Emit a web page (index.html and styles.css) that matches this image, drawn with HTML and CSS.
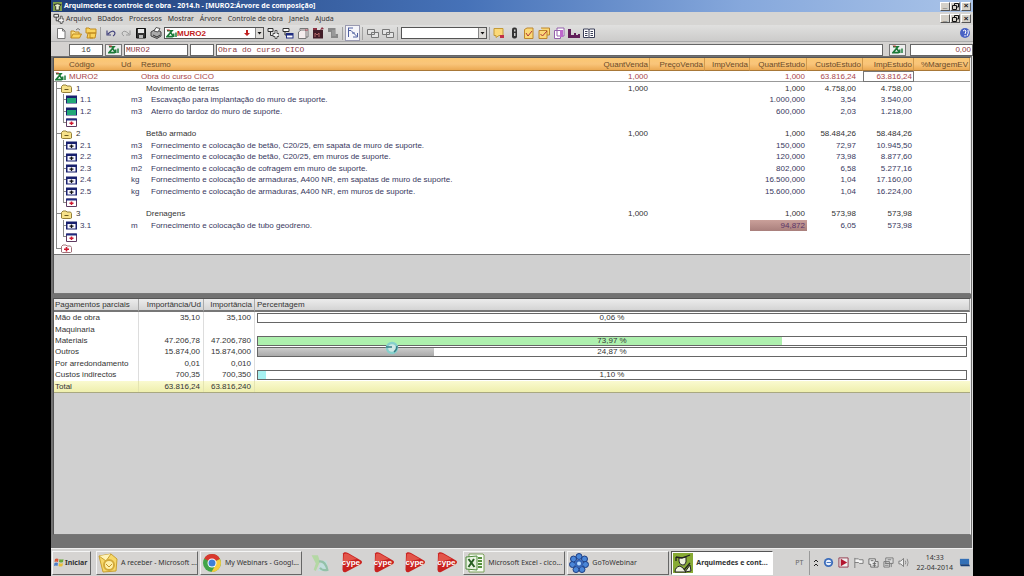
FILE: index.html
```html
<!DOCTYPE html>
<html lang="pt">
<head>
<meta charset="utf-8">
<title>Arquimedes e controle de obra</title>
<link rel="stylesheet" href="styles.css">
</head>
<body>
<svg class="defs" aria-hidden="true">
  <symbol id="arq" viewBox="0 0 12 10"><path d="M1 2h5.500L1 8.500h6.500M5 4l3.500 4.500" fill="none" stroke="#1c7a38" stroke-width="1.800"/><path d="M0 .5h4v2z" fill="#c03030"/><path d="M8.500 5v4M11 4v5" stroke="#1c7a38" stroke-width="1.600"/></symbol>
  <symbol id="folder" viewBox="0 0 11 9"><path d="M.5 8V2.500L2 1h3l1 1h3.500l1 1.500V8l-1 .5h-8z" fill="#f6e28a" stroke="#94803a"/><path d="M3.500 5.500h4" stroke="#6a5a20"/></symbol>
  <symbol id="green" viewBox="0 0 11 9"><path d="M0 .5h11v8H0z" fill="#18206e"/><path d="M1 3h9v5H1z" fill="#22a878"/></symbol>
  <symbol id="item" viewBox="0 0 11 9"><path d="M0 .5h11v8H0z" fill="#18206e"/><path d="M1.500 3h8v4.500h-8z" fill="#f6f6ff"/><path d="M3.500 5.200h4M5.500 3.500v3.500" stroke="#111" stroke-width="1.300"/></symbol>
  <symbol id="new" viewBox="0 0 11 9"><path d="M.5 1h10v7.500H.5z" fill="#fff" stroke="#5d3a60"/><path d="M0 .5h11v2H0z" fill="#202c80"/><path d="M3.500 5.200h4M5.500 3.500v3.500" stroke="#d01830" stroke-width="1.500"/></symbol>
  <symbol id="newfolder" viewBox="0 0 11 9"><path d="M.5 8V2.500L2 1h3l1 1h3.500l1 1.500V8l-1 .5h-8z" fill="#fff" stroke="#a07078"/><path d="M3 5.200h5M5.500 3v4.500" stroke="#d01830" stroke-width="1.600"/></symbol>
  <symbol id="add" viewBox="0 0 12 12"><path d="M1 1.500h5v3H1zM3.500 4.500v4h3" fill="#eee" stroke="#333"/><path d="M8 3.500v3H6v3h2v2h2v-2h2v-3h-2v-3z" fill="#f4f4f4" stroke="#555"/></symbol>
  <symbol id="copies" viewBox="0 0 12 12"><path d="M.5 2.500h7v5h-7zM4.500 5.500h7v5h-7z" fill="#e4e4e4" stroke="#777"/></symbol>
  <symbol id="cype" viewBox="0 0 22 21"><path d="M2 1.500C3 0 5 0 7 1l13 7.500q2 1.500 0 3.500L5 20q-3 1-3.500-2z" fill="#c9211f"/><path d="M3 2q2-1 4 0l9 5L2 10z" fill="#e2554a"/></symbol>
</svg>
<div class="app">
  <header class="titlebar">
    <svg viewBox="0 0 10 10" class="logo"><path d="M0 0h10v10H0z" fill="#7fa04a"/><path d="M1 3l4-1 4 1-2 2v4H3V5z" fill="#e8efd0" stroke="#222"/></svg>
    <h1>Arquimedes e controle de obra - 2014.h - [MURO2:Árvore de composição]</h1>
    <div class="winbtns"><button aria-label="Minimizar">_</button><button aria-label="Restaurar"><svg viewBox="0 0 7 7"><path d="M2.500 2.500v-2h4v3.500h-2M.5 2.500h4v4h-4z" fill="none" stroke="#111"/></svg></button><button class="close" aria-label="Fechar">×</button></div>
  </header>
  <nav class="menubar">
    <svg class="ico"><use href="#add"/></svg>
    <a href="#">Arquivo</a><a href="#">BDados</a><a href="#">Processos</a><a href="#">Mostrar</a><a href="#">Árvore</a><a href="#">Controle de obra</a><a href="#">Janela</a><a href="#">Ajuda</a>
    <div class="winbtns"><button aria-label="Minimizar janela">_</button><button aria-label="Restaurar janela"><svg viewBox="0 0 7 7"><path d="M2.500 2.500v-2h4v3.500h-2M.5 2.500h4v4h-4z" fill="none" stroke="#111"/></svg></button><button class="close" aria-label="Fechar janela">×</button></div>
  </nav>
  <div class="toolbar">
    <button aria-label="Novo"><svg viewBox="0 0 12 12"><path d="M2.500 1.500h5l2.500 2.500v7.500H2.500z" fill="#fff" stroke="#777"/><path d="M7.500 1.500v2.500H10" fill="none" stroke="#777"/></svg></button>
    <button aria-label="Abrir"><svg viewBox="0 0 12 12"><path d="M1 11V4h3l1 1h4v2" fill="#f9dd80" stroke="#c08a20"/><path d="M1 11l2-4h8.500l-2 4z" fill="#fbd45c" stroke="#c08a20"/><path d="M6 3q2-3 4 0" fill="none" stroke="#777"/></svg></button>
    <button aria-label="Bancos de dados"><svg viewBox="0 0 12 12"><path d="M1 6V1h3l1 1h6v4zM2 11l1-5h8l-1 5z" fill="#fbd45c" stroke="#c08a20"/><path d="M5 6v5h3" fill="none" stroke="#c08a20"/></svg></button>
    <span class="sep"></span>
    <button aria-label="Desfazer"><svg viewBox="0 0 12 12"><path d="M3 7q5-5 7-1 0 2-2 3M2 3.500V8h4" fill="none" stroke="#42427c" stroke-width="1.200"/></svg></button>
    <button aria-label="Refazer"><svg viewBox="0 0 12 12"><path d="M9 7Q4 2 2 6q0 2 2 3M10 3.500V8H6" fill="none" stroke="#999"/></svg></button>
    <button aria-label="Guardar"><svg viewBox="0 0 12 12"><path d="M1.500 1.500h9v9.500h-9z" fill="#333" stroke="#111"/><path d="M3 2h6v4H3z" fill="#e8e8e8"/><path d="M4 8h4v3H4z" fill="#bbb"/></svg></button>
    <button aria-label="Imprimir"><svg viewBox="0 0 12 12"><path d="M1 5l5-3 5 3v4l-4 2.500L1 9z" fill="#aaa" stroke="#444"/><path d="M4 4l2-3.500 4 1L8 5z" fill="#fff" stroke="#555"/><path d="M3 8l4 2 3-2" fill="none" stroke="#333"/></svg></button>
    <div class="combo obra"><svg class="arq"><use href="#arq"/></svg><select aria-label="Obra"><option>MURO2</option></select><svg class="down" viewBox="0 0 6 8"><path d="M2 1h2v3h2L3 7 0 4h2z" fill="#c02020"/></svg><svg class="drop" viewBox="0 0 7 10"><path d="M1.500 4h4l-2 2.500z" fill="#111"/></svg></div>
    <button aria-label="Acrescentar"><svg><use href="#add"/></svg></button>
    <button aria-label="Níveis"><svg viewBox="0 0 12 12"><path d="M1 1.500h6v3H1z" fill="#fff" stroke="#333"/><path d="M3 5v3h3" fill="none" stroke="#333"/><path d="M4 6h7.500v5.500H4z" fill="#202c80"/><path d="M5 8.500h5.500v2H5z" fill="#fff"/></svg></button>
    <button aria-label="Folhas"><svg viewBox="0 0 12 12"><path d="M3 3V1.500h8V10H9M1.500 11.500V5L4 3h5v8.500z" fill="#f5eded" stroke="#777"/><path d="M8 3h3" stroke="#b04050"/></svg></button>
    <button aria-label="Medições"><svg viewBox="0 0 12 12"><path d="M1 3h10v8.500H1z" fill="#421d28"/><path d="M3 10V6l2 2 2-2v4" fill="none" stroke="#b06868"/><path d="M8 3l2-3 2 2M1 1h4v2H1z" fill="#8a3040"/></svg></button>
    <button aria-label="Relatório"><svg viewBox="0 0 12 12"><path d="M1 1h7.500v6H11v4H4V5H1z" fill="#888"/><path d="M5 4h3M5 6h3M5 8h4" stroke="#aaa"/></svg></button>
    <span class="sep"></span>
    <button class="pressed" aria-label="Árvore"><svg viewBox="0 0 12 12"><path d="M1 1h5M1.500 1v9M1 3.500h3l6 6M5 6h3M6 10h4.500V6" fill="none" stroke="#5060a0"/></svg></button>
    <span class="sep"></span>
    <button aria-label="Janela anterior"><svg><use href="#copies"/></svg></button>
    <button aria-label="Janela seguinte"><svg><use href="#copies"/></svg></button>
    <span class="sep"></span>
    <div class="combo vista"><select aria-label="Vista"><option></option></select><svg class="drop" viewBox="0 0 7 10"><path d="M1.500 4h4l-2 2.500z" fill="#111"/></svg></div>
    <span class="sep"></span>
    <button aria-label="Nota"><svg viewBox="0 0 12 12"><path d="M1 1.500h9v7H6l-3 2v-2H1z" fill="#fbd978" stroke="#c39a38"/><path d="M7 8h4v3H7z" fill="#c03048"/></svg></button>
    <button aria-label="Semáforo"><svg viewBox="0 0 12 12"><rect x="4" y=".5" width="5" height="11" rx="2" fill="#333"/><path d="M6 2.500h1.500v2H6zM6 6h1.500v3H6z" fill="#ccc"/></svg></button>
    <button aria-label="Verificar"><svg viewBox="0 0 12 12"><path d="M1.500 2.500L4 1h6v10.500H1.500z" fill="#fbd978" stroke="#bd862d"/><path d="M3 6l2 3 4-5" fill="none" stroke="#b03838"/></svg></button>
    <button aria-label="Verificar tudo"><svg viewBox="0 0 12 12"><path d="M3 1h8.500v7H9M1 3.500h8v8H1z" fill="#fbd978" stroke="#bd862d"/><path d="M2.500 7l2 2L9 4" fill="none" stroke="#b03838"/></svg></button>
    <button aria-label="Cópia"><svg viewBox="0 0 12 12"><path d="M4 1h7v8H4zM1.500 3.500h6v8h-6z" fill="#fff" stroke="#9460ac"/><path d="M7 3h3v7H7z" fill="#bf68cc"/></svg></button>
    <button aria-label="Histograma"><svg viewBox="0 0 12 12"><path d="M0 2v9h12V7h-2v1H8V6H6v2H3V2z" fill="#601e58"/></svg></button>
    <button aria-label="Livro"><svg viewBox="0 0 12 12"><path d="M.5 2h5L6 3l.5-1h5v8.500h-5L6 11l-.5-.5h-5z" fill="#fff" stroke="#3a3f58"/><path d="M2 4.500h2.500M2 6.500h2.500M2 8.500h2.500M7.500 4.500H10M7.500 6.500H10M7.500 8.500H10M6 3v8" stroke="#3a3f58"/></svg></button>
    <button class="help" aria-label="Ajuda"><svg viewBox="0 0 12 12"><circle cx="6" cy="6" r="5" fill="#4862c4"/><path d="M4 4q2-2 3 0l-1 3M6 8v1.500M9 3q1 3-1 6" fill="none" stroke="#fff"/></svg></button>
  </div>
  <div class="fields">
    <input class="num" aria-label="Linha" value="16">
    <button aria-label="Obra"><svg class="arq"><use href="#arq"/></svg></button>
    <input class="cod" aria-label="Código" value="MURO2">
    <input class="un" aria-label="Unidade">
    <input class="desc" aria-label="Resumo" value="Obra do curso CICO">
    <button class="b2" aria-label="Valor"><svg class="arq"><use href="#arq"/></svg></button>
    <input class="val" aria-label="Margem" value="0,00">
  </div>
  <main>
    <section class="pane tree">
      <table>
        <colgroup><col class="c-cod"><col class="c-ud"><col><col class="c-qv"><col class="c-pv"><col class="c-iv"><col class="c-qe"><col class="c-ce"><col class="c-ie"><col class="c-mg"></colgroup>
        <thead><tr><th class="h-cod">Código</th><th>Ud</th><th>Resumo</th><th class="r">QuantVenda</th><th class="r">PreçoVenda</th><th class="r">ImpVenda</th><th class="r">QuantEstudo</th><th class="r">CustoEstudo</th><th class="r">ImpEstudo</th><th class="r">%MargemEV</th></tr></thead>
        <tbody>
        <tr class="root"><td class="l0"><svg class="arq"><use href="#arq"/></svg>MURO2</td><td></td><td class="t0">Obra do curso CICO</td><td class="r">1,000</td><td></td><td></td><td class="r">1,000</td><td class="r ce">63.816,24</td><td class="r sel">63.816,24</td><td></td></tr>
        <tr><td class="l1"><svg><use href="#folder"/></svg>1</td><td></td><td class="t1">Movimento de terras</td><td class="r">1,000</td><td></td><td></td><td class="r">1,000</td><td class="r ce">4.758,00</td><td class="r">4.758,00</td><td></td></tr>
        <tr class="leaf"><td class="l2"><svg><use href="#green"/></svg>1.1</td><td class="ud">m3</td><td class="t2">Escavação para implantação do muro de suporte.</td><td></td><td></td><td></td><td class="r">1.000,000</td><td class="r ce">3,54</td><td class="r">3.540,00</td><td></td></tr>
        <tr class="leaf"><td class="l2"><svg><use href="#green"/></svg>1.2</td><td class="ud">m3</td><td class="t2">Aterro do tardoz do muro de suporte.</td><td></td><td></td><td></td><td class="r">600,000</td><td class="r ce">2,03</td><td class="r">1.218,00</td><td></td></tr>
        <tr><td class="l2 end"><svg><use href="#new"/></svg></td><td colspan="9"></td></tr>
        <tr><td class="l1"><svg><use href="#folder"/></svg>2</td><td></td><td class="t1">Betão armado</td><td class="r">1,000</td><td></td><td></td><td class="r">1,000</td><td class="r ce">58.484,26</td><td class="r">58.484,26</td><td></td></tr>
        <tr class="leaf"><td class="l2"><svg><use href="#item"/></svg>2.1</td><td class="ud">m3</td><td class="t2">Fornecimento e colocação de betão, C20/25, em sapata de muro de suporte.</td><td></td><td></td><td></td><td class="r">150,000</td><td class="r ce">72,97</td><td class="r">10.945,50</td><td></td></tr>
        <tr class="leaf"><td class="l2"><svg><use href="#item"/></svg>2.2</td><td class="ud">m3</td><td class="t2">Fornecimento e colocação de betão, C20/25, em muros de suporte.</td><td></td><td></td><td></td><td class="r">120,000</td><td class="r ce">73,98</td><td class="r">8.877,60</td><td></td></tr>
        <tr class="leaf"><td class="l2"><svg><use href="#item"/></svg>2.3</td><td class="ud">m2</td><td class="t2">Fornecimento e colocação de cofragem em muro de suporte.</td><td></td><td></td><td></td><td class="r">802,000</td><td class="r ce">6,58</td><td class="r">5.277,16</td><td></td></tr>
        <tr class="leaf"><td class="l2"><svg><use href="#item"/></svg>2.4</td><td class="ud">kg</td><td class="t2">Fornecimento e colocação de armaduras, A400 NR, em sapatas de muro de suporte.</td><td></td><td></td><td></td><td class="r">16.500,000</td><td class="r ce">1,04</td><td class="r">17.160,00</td><td></td></tr>
        <tr class="leaf"><td class="l2"><svg><use href="#item"/></svg>2.5</td><td class="ud">kg</td><td class="t2">Fornecimento e colocação de armaduras, A400 NR, em muros de suporte.</td><td></td><td></td><td></td><td class="r">15.600,000</td><td class="r ce">1,04</td><td class="r">16.224,00</td><td></td></tr>
        <tr><td class="l2 end"><svg><use href="#new"/></svg></td><td colspan="9"></td></tr>
        <tr><td class="l1"><svg><use href="#folder"/></svg>3</td><td></td><td class="t1">Drenagens</td><td class="r">1,000</td><td></td><td></td><td class="r">1,000</td><td class="r ce">573,98</td><td class="r">573,98</td><td></td></tr>
        <tr class="leaf"><td class="l2"><svg><use href="#item"/></svg>3.1</td><td class="ud">m</td><td class="t2">Fornecimento e colocação de tubo geodreno.</td><td></td><td></td><td></td><td class="r mark">94,872</td><td class="r ce">6,05</td><td class="r">573,98</td><td></td></tr>
        <tr><td class="l2 end"><svg><use href="#new"/></svg></td><td colspan="9"></td></tr>
        <tr><td class="l1 end"><svg><use href="#newfolder"/></svg></td><td colspan="9"></td></tr>
        </tbody>
      </table>
    </section>
    <section class="pane pays">
      <table>
        <colgroup><col class="p-name"><col class="p-ud"><col class="p-imp"><col></colgroup>
        <thead><tr><th>Pagamentos parciais</th><th class="r">Importância/Ud</th><th class="r">Importância</th><th class="h-pc">Percentagem</th></tr></thead>
        <tbody>
        <tr><td>Mão de obra</td><td class="r">35,10</td><td class="r">35,100</td><td class="pc"><div class="bar"><span>0,06 %</span></div></td></tr>
        <tr><td>Maquinaria</td><td></td><td></td><td></td></tr>
        <tr><td>Materiais</td><td class="r">47.206,78</td><td class="r">47.206,780</td><td class="pc"><div class="bar"><i class="green" style="width:73.97%"></i><span>73,97 %</span></div></td></tr>
        <tr><td>Outros</td><td class="r">15.874,00</td><td class="r">15.874,000</td><td class="pc"><div class="bar"><i class="grey" style="width:24.87%"></i><span>24,87 %</span></div></td></tr>
        <tr><td>Por arredondamento</td><td class="r">0,01</td><td class="r">0,010</td><td></td></tr>
        <tr><td>Custos indirectos</td><td class="r">700,35</td><td class="r">700,350</td><td class="pc"><div class="bar"><i class="cyan" style="width:1.10%"></i><span>1,10 %</span></div></td></tr>
        <tr class="total"><td>Total</td><td class="r">63.816,24</td><td class="r">63.816,240</td><td></td></tr>
        </tbody>
      </table>
      <svg class="busy" viewBox="0 0 14 14"><circle cx="7" cy="7" r="5" fill="#d0e8e4" stroke="#86d0cc" stroke-width="2.500"/><path d="M1 6h6M12 5q0 4-3 6" fill="none" stroke="#377f88" stroke-width="1.500"/></svg>
    </section>
  </main>
  <footer class="taskbar">
    <button class="task start"><svg viewBox="0 0 10 11"><path d="M1 2q2-1 3.500 0L4 5Q2 4 .5 5z" fill="#d95738"/><path d="M5.500 2q2 1 4 0L9 5q-2 1-4 0z" fill="#69a83b"/><path d="M.5 6Q2 5 4 6l-.5 3Q2 8 0 9z" fill="#4a7cc8"/><path d="M5 6q2 1 4 0l-.5 3q-2 1-4 0z" fill="#e9bf3c"/></svg>Iniciar</button>
    <button class="task"><svg viewBox="0 0 20 20"><path d="M1 3l12-2 6 5-1 12-13 1z" fill="#f7d869" stroke="#c9a030"/><path d="M1 3l7 5 5-7" fill="#fff3b8" stroke="#c9a030"/><circle cx="11" cy="12" r="5" fill="#fff0a8" stroke="#d3aa3b" stroke-width="2"/><path d="M8 11l3 3 3-3" fill="none" stroke="#c3942b"/></svg><span>A receber - Microsoft ...</span></button>
    <button class="task"><svg viewBox="0 0 20 20"><circle cx="10" cy="10" r="9" fill="#42a447"/><path d="M10 10L2.200 5.500A9 9 0 0 1 18 6z" fill="#d9382e"/><path d="M10 10l8-4a9 9 0 0 1-8.500 13l4-7z" fill="#f7cc3d"/><circle cx="10" cy="10" r="4.500" fill="#fff"/><circle cx="10" cy="10" r="3.500" fill="#3f7fd6"/></svg><span>My Webinars - Googl...</span></button>
    <div class="quick">
      <a href="#" aria-label="Messenger"><svg viewBox="0 0 20 20"><path d="M2 3h6l2 6-4 9-2-1 2-6z" fill="#b4d8a4"/><path d="M11 9l5-1 2 10H8z" fill="#c2dede"/><path d="M9 9q6-1 8 8-5 1-7-2" fill="none" stroke="#93c1a8" stroke-width="2"/></svg></a>
      <a class="cype" href="#"><svg><use href="#cype"/></svg><b>cype</b></a>
      <a class="cype" href="#"><svg><use href="#cype"/></svg><b>cype</b></a>
      <a class="cype" href="#"><svg><use href="#cype"/></svg><b>cype</b></a>
      <a class="cype" href="#"><svg><use href="#cype"/></svg><b>cype</b></a>
    </div>
    <button class="task"><svg viewBox="0 0 20 20"><path d="M4 1h14l1 1v17H4z" fill="#f7fbf2" stroke="#7ba05b"/><path d="M13 5h4M13 8h4M13 11h4M13 14h4" stroke="#55903d" stroke-width="2"/><path d="M1 4l11-1v14L1 16z" fill="#e9f3e1" stroke="#4d8a3b"/><path d="M3.500 6l6 8M9 6l-5.500 8" stroke="#285f23" stroke-width="2"/></svg><span>Microsoft Excel - cico...</span></button>
    <button class="task"><svg viewBox="0 0 20 20"><g fill="#4a86d8" stroke="#1c3c82"><circle cx="10" cy="3.500" r="3"/><circle cx="15.500" cy="6" r="3"/><circle cx="16.500" cy="11.500" r="3"/><circle cx="13" cy="16.500" r="3"/><circle cx="7" cy="16.500" r="3"/><circle cx="3.500" cy="11.500" r="3"/><circle cx="4.500" cy="6" r="3"/></g><circle cx="10" cy="10.500" r="4" fill="#3565b8"/><circle cx="10" cy="10.500" r="2" fill="#b8dcff"/></svg><span>GoToWebinar</span></button>
    <button class="task active"><svg viewBox="0 0 20 20"><path d="M0 0h20v20H0z" fill="#88ab35"/><path d="M6 5l7-1v5q-1 4-4 3-3-1-3-4zM2 19q0-5 5-6l3 2 3 4z" fill="#eef3dc" stroke="#222"/><path d="M3 4l6 1 8-3M3 4v4M11 17l6-7" fill="none" stroke="#222" stroke-width="1.300"/><path d="M12 19l6-1-1-6z" fill="#eef3dc" stroke="#222"/></svg><span>Arquimedes e cont...</span></button>
    <span class="lang">PT</span>
    <div class="tray">
      <svg class="chev" viewBox="0 0 6 10"><path d="M1 4l2-2 2 2M1 8l2-2 2 2" fill="none" stroke="#222"/></svg>
      <svg viewBox="0 0 12 12"><circle cx="6" cy="6" r="5" fill="#3c6cba"/><circle cx="6" cy="6" r="3" fill="#e8f0fc"/><path d="M4 6h5" stroke="#3c6cba"/></svg>
      <svg viewBox="0 0 12 12"><path d="M1 1h10v10H1z" fill="#eee" stroke="#903448"/><path d="M3 2l7 4-7 4z" fill="#b3152f"/></svg>
      <svg viewBox="0 0 12 12"><path d="M2 1v11M2 2h4l1 1h4v4H7L6 6H2" fill="#f4f4f4" stroke="#777"/></svg>
      <svg viewBox="0 0 12 12"><path d="M1 2h7v3h3v6H3V8H1z" fill="#eee" stroke="#666"/><path d="M3 4h3M5 7h4M5 9h4M7 5v6" stroke="#666"/></svg>
      <svg viewBox="0 0 12 12"><path d="M3 1h8v6H3zM1 5h6v6H1z" fill="#ddd" stroke="#777"/><path d="M5 3h4M2 7h4M2 9h4M9 7v4" stroke="#777"/></svg>
      <svg viewBox="0 0 12 12"><path d="M1 4.500h2l3-3v9l-3-3H1z" fill="#eee" stroke="#777"/><path d="M8 4q1 2 0 4M10 2q2 4 0 8" fill="none" stroke="#888"/></svg>
      <time><span>14:33</span><span>22-04-2014</span></time>
      <svg viewBox="0 0 12 12"><path d="M1 2h10v6H1z" fill="#3470b6"/><path d="M1 8h10l1 2H2z" fill="#173f78"/></svg>
    </div>
  </footer>
</div>
</body>
</html>
```

FILE: styles.css
```css
* { box-sizing: border-box; }

body {
  margin: 0;
  background: #000;
  color: #333;
  font: 8px/11px "Liberation Sans", Arial, sans-serif;
}

button, input, select { font: inherit; color: inherit; margin: 0; padding: 0; }
a { color: inherit; text-decoration: none; }
svg { display: block; flex: none; }
.defs { position: absolute; width: 0; height: 0; }
.arq { width: 11px; height: 9px; }

.app {
  display: flex;
  flex-direction: column;
  min-height: 100vh;
  margin: 0 51px;
  background: #d4d2d0;
}

/* Title and menu */
.titlebar {
  display: flex;
  align-items: center;
  height: 12px;
  padding: 0 2px;
  gap: 2px;
  background: linear-gradient(90deg, #203f78, #4672b8 45%, #86a8dc 75%, #a9c3e8);
}
.logo { width: 9px; height: 9px; }
.titlebar h1 {
  flex: 1;
  margin: 0;
  color: #fff;
  font: bold 7px/12px "Noto Sans", sans-serif;
  white-space: nowrap;
}
.menubar {
  display: flex;
  align-items: center;
  height: 13px;
  padding: 0 2px;
  gap: 6px;
  background: #d6d5d3;
  font: 7px/12px "Noto Sans", sans-serif;
}
.menubar .ico { width: 11px; height: 11px; margin-right: -4px; }
.winbtns { display: flex; margin-left: auto; }
.winbtns button {
  display: flex;
  align-items: center;
  justify-content: center;
  width: 10px;
  height: 9px;
  border: 1px solid;
  border-color: #fff #555 #555 #fff;
  background: #d4d0c8;
  color: #111;
  font: bold 8px/6px "Liberation Sans", sans-serif;
}
.winbtns .close { margin-left: 1px; }
.winbtns svg { width: 7px; height: 7px; }

/* Toolbar */
.toolbar {
  display: flex;
  align-items: center;
  height: 16px;
  padding: 0 2px 0 3px;
  gap: 2px;
  background: linear-gradient(#e0e0df, #cccbca);
}
.toolbar button {
  display: flex;
  align-items: center;
  justify-content: center;
  width: 13px;
  height: 14px;
  border: 0;
  background: none;
}
.toolbar button svg { width: 12px; height: 12px; }
.toolbar .pressed { background: #f5f5fa; outline: 1px solid #9a9ab0; }
.toolbar .help { margin-left: auto; }
.sep { width: 1px; height: 13px; margin: 0 1px; background: #a2a2a2; }
.vista + .sep { margin: 0; }
.combo {
  display: flex;
  align-items: center;
  height: 12px;
  border: 1px solid #555;
  background: #fff;
}
.combo select {
  flex: 1;
  min-width: 0;
  height: 10px;
  border: 0;
  appearance: none;
  background: none;
}
.combo .drop { width: 8px; height: 10px; border-left: 1px solid #888; background: #dddbd8; }
.obra { width: 100px; color: #c22020; font-weight: bold; padding-left: 1px; }
.obra .down { width: 6px; height: 8px; margin-right: 5px; }
.vista { width: 86px; }

/* Entry fields */
.fields {
  display: flex;
  align-items: center;
  height: 15px;
  padding: 1px 0 0 18px;
  gap: 2px;
  border-top: 1px solid #aaa;
  color: #8f3a44;
  font: 8px/11px "Liberation Mono", monospace;
}
.fields input {
  height: 12px;
  min-width: 0;
  padding: 0 1px;
  border: 1px solid #666;
  background: #fff;
}
.fields button {
  display: flex;
  align-items: center;
  justify-content: center;
  width: 17px;
  height: 12px;
  border: 1px solid #777;
  background: #eee;
}
.fields .num { width: 34px; text-align: center; color: #444; }
.fields .cod { width: 64px; }
.fields .un { width: 24px; }
.fields .desc { flex: 1; }
.fields .b2 { margin: 0 2px 0 4px; }
.fields .val { width: 63px; text-align: right; font-family: "Liberation Sans", sans-serif; }

/* Work area */
main {
  flex: 1;
  display: flex;
  flex-direction: column;
  padding: 0 1px 0 2px;
  background: #727272;
  border-right: 1px solid #ddd;
}
.pane {
  position: relative;
  background: #d0d0d0;
  border: 1px solid #eee;
  border-color: #555 #eee #777 #555;
}
.tree { height: 237px; margin-top: 1px; }
.pays { flex: 1; margin: 4px 0 13px; }

table { width: 100%; table-layout: fixed; border-collapse: separate; border-spacing: 0; background: #fff; }
th, td { padding: 0 2px 0 0; font-weight: normal; text-align: left; white-space: nowrap; line-height: 9px; }
td { height: 11px; }
th.r, td.r { text-align: right; }

.tree table { height: 197px; border-bottom: 1px solid #777; }
.tree th { height: 13px; padding: 0 1px; background: linear-gradient(#fbc873, #f9c57a 50%, #eba953); border-bottom: 1px solid #a87838; color: #6a4a28; }
.tree th.h-cod { padding-left: 15px; }
.tree th.r { border-right: 1px solid #d29a4c; }
.c-cod { width: 66px; }
.c-ud { width: 20px; }
.c-qv { width: 54px; }
.c-pv { width: 55px; }
.c-iv { width: 45px; }
.c-qe { width: 57px; }
.c-ce { width: 56px; }
.c-ie { width: 51px; }
.c-mg { width: 56px; }
.root td { color: #a8454a; border-bottom: 1px solid #999; }
.leaf td { color: #38385e; }
.tree td.ce { padding-right: 7px; }
.tree td.sel { outline: 1px solid #777; outline-offset: -1px; }
.tree td.mark { background: linear-gradient(#caa09a, #a97f7c); color: #5a3468; }
td svg { display: inline-block; vertical-align: middle; width: 11px; height: 9px; margin: -1px 0; }
td.l0 svg { margin-left: 1px; margin-right: 3px; }
td.l1 { padding-left: 7px; background: linear-gradient(#888, #888) 2px 0 / 1px 100% no-repeat, linear-gradient(#888, #888) 2px 50% / 5px 1px no-repeat; }
td.l1 svg { margin-right: 4px; }
td.l2 { padding-left: 12px; background: linear-gradient(#888, #888) 2px 0 / 1px 100% no-repeat, linear-gradient(#888, #888) 9px 0 / 1px 100% no-repeat, linear-gradient(#888, #888) 9px 50% / 3px 1px no-repeat; }
td.l2.end { background-size: 1px 100%, 1px 50%, 3px 1px; }
td.l1.end { background-size: 1px 50%, 5px 1px; }
td.l2 svg { margin-right: 3px; }
td.ud { padding-left: 11px; }
td.t0 { padding-left: 1px; }
td.t1 { padding-left: 6px; }
td.t2 { padding-left: 11px; }

.pays table { height: 94px; border-bottom: 1px solid #a9a880; }
.pays th { height: 13px; padding: 0 2px 0 1px; background: linear-gradient(#ececec, #d4d4d4); border-right: 1px solid #aaa; border-bottom: 2px solid #777; }
.pays th.h-pc { padding-left: 2px; }
.pays td { padding: 0 3px 0 1px; border-right: 1px solid #ddd; }
.pays td:last-child { border-right: 0; padding-left: 2px; }
.p-name { width: 85px; }
.p-ud { width: 65px; }
.p-imp { width: 51px; }
.pays .total td { background: linear-gradient(#fafad0, #efefad); border-right-color: #e4e4b0; }
.bar { position: relative; height: 10px; border: 1px solid #666; background: #fff; text-align: center; line-height: 8px; }
.bar i { position: absolute; top: 0; bottom: 0; left: 0; }
.bar span { position: relative; }
.green { background: #aef0ae; }
.grey { background: linear-gradient(#ccc, #aaa); }
.cyan { background: #a6f0f0; }
.busy { position: absolute; left: 331px; top: 42px; width: 14px; height: 14px; }

/* Taskbar */
.taskbar {
  display: flex;
  align-items: center;
  height: 28px;
  padding: 0 1px;
  gap: 2px;
  background: #d4d3d2;
  border-top: 1px solid #eee;
  font: 7px/10px "Noto Sans", sans-serif;
}
.task {
  display: flex;
  align-items: center;
  gap: 3px;
  width: 102px;
  height: 24px;
  padding: 0 1px;
  border: 1px solid;
  border-color: #f5f5f5 #666 #666 #f5f5f5;
  background: #d6d4d2;
  white-space: nowrap;
  overflow: hidden;
}
.task svg { width: 20px; height: 20px; }
.start { width: 39px; margin-right: 3px; gap: 1px; font-weight: bold; }
.start svg { width: 10px; height: 11px; }
.active { background: #fff; border-color: #555 #fff #fff #555; font-weight: bold; }
.quick { display: flex; flex: 1; align-items: center; justify-content: space-between; padding: 0 3px 0 5px; }
.quick svg { width: 22px; height: 21px; }
.cype { display: grid; place-items: center start; }
.cype svg, .cype b { grid-area: 1 / 1; }
.cype b { color: #fff; font: bold 8px/10px "Liberation Sans", sans-serif; padding-left: 1px; }
.lang { margin: 0 4px 0 20px; color: #666; }
.tray {
  display: flex;
  align-items: center;
  gap: 4px;
  height: 24px;
  padding: 0 2px 0 3px;
  border-left: 1px solid #999;
}
.tray svg { width: 11px; height: 11px; }
.tray .chev { width: 6px; height: 10px; }
.tray time { display: flex; flex-direction: column; align-items: center; margin: 0 2px 0 3px; }
```
